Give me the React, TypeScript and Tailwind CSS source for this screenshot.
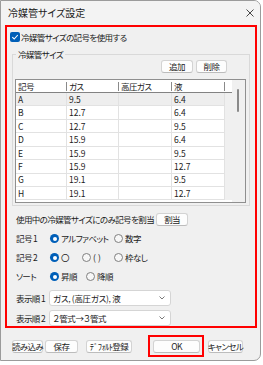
import type { ReactNode } from "react";

const rows = [
  ["A", "9.5", "", "6.4"],
  ["B", "12.7", "", "6.4"],
  ["C", "12.7", "", "9.5"],
  ["D", "15.9", "", "6.4"],
  ["E", "15.9", "", "9.5"],
  ["F", "15.9", "", "12.7"],
  ["G", "19.1", "", "9.5"],
  ["H", "19.1", "", "12.7"],
];

const colW = ["w-[51px]", "w-[52px]", "w-[53px]", "w-[53px]"];

function Btn({ children, className = "" }: { children: ReactNode; className?: string }) {
  return (
    <button
      className={`flex h-[13px] shrink-0 items-center justify-center rounded-[3px] border border-[#d3d3d3] border-b-[#bcbcbc] bg-[#fdfdfd] leading-none ${className}`}
    >
      {children}
    </button>
  );
}

function Radio({ on = false }: { on?: boolean }) {
  if (on)
    return (
      <span className="flex h-[9px] w-[9px] shrink-0 items-center justify-center rounded-full bg-[#005fb8]">
        <span className="h-[4px] w-[4px] rounded-full bg-white" />
      </span>
    );
  return <span className="h-[9px] w-[9px] shrink-0 rounded-full border border-[#808080] bg-[#f7f7f7]" />;
}

function Choice({ on, label, w }: { on?: boolean; label: string; w: string }) {
  return (
    <div className={`flex shrink-0 items-center gap-[2px] ${w}`}>
      <Radio on={on} />
      <span className="leading-none">{label}</span>
    </div>
  );
}

function Select({ value }: { value: string }) {
  return (
    <div className="flex h-[16px] w-[122px] items-center justify-between rounded-[3px] border border-[#d5d5d5] bg-white pl-[3px] pr-[5px]">
      <span className="leading-none tracking-[-0.3px]">{value}</span>
      <svg width="6" height="4" viewBox="0 0 6 4" fill="none">
        <path d="M0.5 0.5L3 3L5.5 0.5" stroke="#6b6b6b" strokeWidth="0.9" />
      </svg>
    </div>
  );
}

export default function App() {
  return (
    <div className="h-[365px] w-[263px] bg-white">
      <div className="flex h-[361px] w-[261px] flex-col overflow-hidden whitespace-nowrap rounded-r-[7px] border border-[#9b9b9b] bg-[#f0f0f0] font-['Noto_Sans_CJK_JP',sans-serif] text-[8.5px] tracking-[-0.6px] text-[#1b1b1b] [font-feature-settings:'palt']">
        {/* title bar */}
        <div className="flex h-[24px] shrink-0 items-center justify-between bg-[#f3f3f3] pl-[7px] pr-[6px]">
          <span className="text-[10px] leading-none tracking-normal">冷媒管サイズ設定</span>
          <svg width="8" height="8" viewBox="0 0 8 8">
            <path d="M0.5 0.5L7.5 7.5M7.5 0.5L0.5 7.5" stroke="#333" strokeWidth="0.9" />
          </svg>
        </div>

        {/* highlighted settings area */}
        <div className="ml-[4px] flex h-[303px] w-[252px] flex-col border-2 border-[#ff0000]">
          <div className="ml-[3px] mt-[5px] flex h-[10px] items-center gap-[1px]">
            <span className="flex h-[10px] w-[10px] items-center justify-center rounded-[2px] bg-[#005fb8]">
              <svg width="8" height="8" viewBox="0 0 8 8" fill="none">
                <path d="M1.3 4.2L3.2 6L6.8 2" stroke="white" strokeWidth="1.1" />
              </svg>
            </span>
            <span className="leading-none">冷媒管サイズの記号を使用する</span>
          </div>

          <fieldset className="ml-[5px] mt-[6px] w-[238px] border border-[#d9d9d9] pb-[2px] pl-[2px] pr-[3px]">
            <legend className="ml-[1px] px-[2px] leading-[12px]">冷媒管サイズ</legend>
            <div className="flex justify-end gap-[3px] pr-[19px]">
              <Btn className="w-[32px]">追加</Btn>
              <Btn className="w-[31px]">削除</Btn>
            </div>

            <div className="mt-[6px] flex h-[124px] w-[231px] border border-[#8f8f8f] bg-white">
              <div className="flex-1 overflow-hidden">
                <div className="flex h-[13px] border-b border-[#828282]">
                  {["記号", "ガス", "高圧ガス", "液"].map((h, i) => (
                    <div key={h} className={`flex items-center justify-between pl-[2px] ${colW[i]}`}>
                      <span className="leading-none">{h}</span>
                      <span className="h-[9px] w-px bg-[#8a8a8a]" />
                    </div>
                  ))}
                  <div className="flex-1" />
                </div>
                {rows.map((r, ri) => (
                  <div key={r[0]} className={`flex h-[13.43px] ${ri === 0 ? "bg-[#eeeeee]" : ""}`}>
                    {r.map((c, i) => (
                      <div
                        key={i}
                        className={`flex items-center border-b border-r border-[#e2e2e2] pl-[2px] leading-none tracking-normal ${colW[i]}`}
                      >
                        {c}
                      </div>
                    ))}
                    <div className="flex-1 bg-[#f0f0f0]" />
                  </div>
                ))}
              </div>
              <div className="w-[13px] bg-[#f0f0f0] pl-[5px] pt-[9px]">
                <div className="h-[23px] w-[2px] rounded-full bg-[#8a8a8a]" />
              </div>
            </div>
          </fieldset>

          <div className="mt-[7px] flex h-[13px] items-center gap-[2px] pl-[9px]">
            <span className="leading-none">使用中の冷媒管サイズにのみ記号を割当</span>
            <Btn className="w-[32px]">割当</Btn>
          </div>

          <div className="mt-[3px] flex flex-col pl-[9px]">
            <div className="flex h-[19px] items-center">
              <span className="w-[34px] shrink-0 leading-none">記号 1</span>
              <Choice on label="アルファベット" w="w-[64px]" />
              <Choice label="数字" w="w-[40px]" />
            </div>
            <div className="flex h-[19px] items-center">
              <span className="w-[34px] shrink-0 leading-none">記号 2</span>
              <Choice on label="〇" w="w-[32px]" />
              <Choice label={"(\u00a0\u00a0)"} w="w-[32px]" />
              <Choice label="枠なし" w="w-[40px]" />
            </div>
            <div className="flex h-[19px] items-center">
              <span className="w-[34px] shrink-0 leading-none">ソート</span>
              <Choice on label="昇順" w="w-[36px]" />
              <Choice label="降順" w="w-[40px]" />
            </div>
          </div>

          <div className="mt-[4px] flex flex-col gap-[4px] pl-[9px]">
            <div className="flex items-center">
              <span className="w-[33px] shrink-0 leading-none">表示順 1</span>
              <Select value="ガス, (高圧ガス), 液" />
            </div>
            <div className="flex items-center">
              <span className="w-[33px] shrink-0 leading-none">表示順 2</span>
              <Select value="２管式→３管式" />
            </div>
          </div>
        </div>

        {/* footer buttons */}
        <div className="mt-[7px] flex h-[22px] items-center pl-[11px]">
          <Btn className="w-[31px]">読み込み</Btn>
          <Btn className="ml-[2px] w-[33px]">保存</Btn>
          <Btn className="ml-[8px] w-[46px]">ﾃﾞﾌｫﾙﾄ登録</Btn>
          <div className="ml-[16px] flex h-[22px] w-[56px] items-center border-2 border-[#ff0000] pl-[3px]">
            <Btn className="w-[47px] border-[#0067c0] border-b-[#0067c0]">OK</Btn>
          </div>
          <Btn className="ml-[4px] w-[35px]">キャンセル</Btn>
        </div>
      </div>
    </div>
  );
}
